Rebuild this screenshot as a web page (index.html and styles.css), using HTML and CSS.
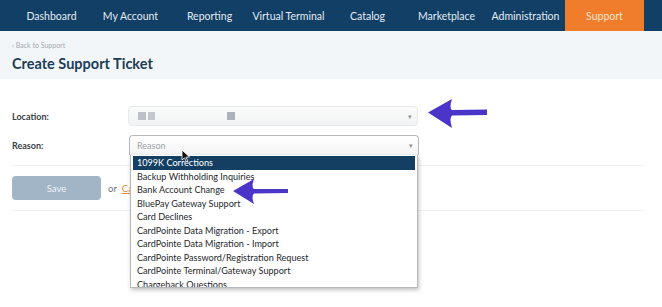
FILE: index.html
```html
<!DOCTYPE HTML>
<html>
<head>
  <title>Create Support Ticket</title>
  <meta name="viewport" content="width=device-width, initial-scale=1">
  <link rel="stylesheet" href="styles.css">
</head>
<body>
  <div class="topnav">
    <a class="navitem" href="#">Dashboard</a>
    <a class="navitem" href="#">My Account</a>
    <a class="navitem" href="#">Reporting</a>
    <a class="navitem" href="#">Virtual Terminal</a>
    <a class="navitem" href="#">Catalog</a>
    <a class="navitem" href="#">Marketplace</a>
    <a class="navitem" href="#">Administration</a>
    <a class="navitem active" href="#">Support</a>
  </div>
  <div class="pagehead">
    <a class="backlink" href="#">&lsaquo; Back to Support</a>
    <h1>Create Support Ticket</h1>
  </div>
  <div class="content">
    <div class="form-row">
      <label class="form-label">Location:</label>
      <div class="select location">
        <span class="blur b1"></span><span class="blur b2"></span><span class="blur b3"></span>
        <span class="caret">&#9662;</span>
      </div>
    </div>
    <div class="form-row">
      <label class="form-label">Reason:</label>
      <div class="field">
        <div class="select reason">
          <span class="placeholder">Reason</span>
          <span class="caret">&#9662;</span>
        </div>
        <ul class="dropdown">
          <li class="selected">1099K Corrections</li>
          <li>Backup Withholding Inquiries</li>
          <li>Bank Account Change</li>
          <li>BluePay Gateway Support</li>
          <li>Card Declines</li>
          <li>CardPointe Data Migration - Export</li>
          <li>CardPointe Data Migration - Import</li>
          <li>CardPointe Password/Registration Request</li>
          <li>CardPointe Terminal/Gateway Support</li>
          <li>Chargeback Questions</li>
        </ul>
      </div>
    </div>
    <div class="actions">
      <button class="save">Save</button>
      <span class="or">or</span>
      <a class="cancel" href="#">Cancel</a>
    </div>
  </div>

  <svg class="arrow arrow-one" width="64" height="32" viewBox="0 0 64 32">
    <path d="M1 13.5 L25 0 Q22 9 25 11 L60 10.5 L60 16 L25 16.5 Q22 19 25 29 Z" fill="#4a35c8"/>
  </svg>
  <svg class="arrow arrow-two" width="58" height="28" viewBox="0 0 58 28">
    <path d="M1 12 L22 0 Q19 8 22 10 L56 10 L56 14 L22 14.5 Q19 17 22 25 Z" fill="#4a35c8"/>
  </svg>
  <svg class="cursor" width="10" height="14" viewBox="0 0 10 14">
    <path d="M1 1 L1 11 L3.5 8.8 L5.5 13 L7 12.3 L5 8.2 L8.5 8 Z" fill="#111" stroke="#fff" stroke-width="0.8"/>
  </svg>
</body>
</html>
```

FILE: styles.css
```css
html {
  font-family: Lato, "Open Sans", Arial, sans-serif;
}
body {
  margin: 0;
  width: 662px;
  height: 307px;
  overflow: hidden;
  position: relative;
  background-color: #ffffff;
}
.topnav {
  display: flex;
  height: 31px;
  padding-left: 12px;
  background-color: #113f66;
}
.navitem {
  width: 79px;
  display: flex;
  align-items: center;
  justify-content: center;
  font-size: 10.5px;
  color: #e4ebf2;
  text-decoration: none;
  white-space: nowrap;
}
.navitem.active {
  background-color: #f07d2b;
  color: #fbe3cf;
}
.pagehead {
  height: 48px;
  padding: 0 12px;
  background-color: #f3f6f9;
  box-sizing: border-box;
  padding-top: 10px;
}
.backlink {
  display: block;
  font-size: 7px;
  color: #a3a8ad;
  text-decoration: none;
}
.pagehead h1 {
  margin: 6px 0 0;
  font-size: 14.5px;
  font-weight: bold;
  color: #1e3d57;
}
.content {
  padding: 27px 17px 0 12px;
}
.form-row {
  display: grid;
  grid-template-columns: 116px 290px;
  align-items: center;
  height: 20px;
  margin-bottom: 9px;
}
.form-label {
  font-size: 9px;
  font-weight: bold;
  color: #3b3f44;
}
.field {
  position: relative;
}
.select {
  position: relative;
  height: 20px;
  box-sizing: border-box;
  border-radius: 4px;
  display: flex;
  align-items: center;
  padding-left: 7px;
}
.location {
  background: linear-gradient(#fbfbfb, #f1f2f3);
  border: 1px solid #e9eaeb;
}
.reason {
  width: 290px;
  margin-left: 1px;
  background: linear-gradient(#ffffff, #f4f4f4);
  border: 1px solid #b6b9bc;
  border-bottom: none;
  border-radius: 4px 4px 0 0;
}
.placeholder {
  font-size: 9px;
  color: #a0a3a6;
}
.caret {
  position: absolute;
  right: 5px;
  top: 5px;
  font-size: 7px;
  color: #8e9194;
}
.blur {
  display: inline-block;
  height: 8px;
  background-color: #bcc1c8;
}
.b1 { width: 8px; margin-left: 2px; }
.b2 { width: 7px; margin-left: 2px; background-color: #c4c8ce; }
.b3 { width: 8px; margin-left: 72px; background-color: #aeb3ba; }
.dropdown {
  position: absolute;
  top: 20px;
  left: 2px;
  width: 288px;
  height: 133px;
  margin: 0;
  padding: 1px 2px 0;
  list-style: none;
  overflow: hidden;
  box-sizing: border-box;
  background-color: #ffffff;
  border: 1px solid #b6b9bc;
  border-top: none;
  box-shadow: 1px 2px 4px rgba(0,0,0,.25);
  z-index: 2;
}
.dropdown li {
  height: 13.5px;
  line-height: 13.5px;
  padding-left: 4px;
  font-size: 9.1px;
  color: #26292c;
  white-space: nowrap;
}
.dropdown li.selected {
  background-color: #143f63;
  color: #ffffff;
}
.actions {
  display: flex;
  align-items: center;
  margin-top: 10px;
  padding: 10px 0;
  border-top: 1px solid #eef0f2;
  border-bottom: 1px solid #eef0f2;
}
.save {
  width: 89px;
  height: 24px;
  border: none;
  border-radius: 4px;
  background-color: #a2b5c6;
  color: #eef2f6;
  font-family: Lato, Arial, sans-serif;
  font-size: 9.5px;
}
.or {
  margin-left: 7px;
  font-size: 9.5px;
  color: #6d7175;
}
.cancel {
  margin-left: 5px;
  font-size: 9.5px;
  color: #e98b3d;
}
.arrow {
  position: absolute;
  z-index: 3;
}
.arrow-one {
  left: 427px;
  top: 99px;
}
.arrow-two {
  left: 232px;
  top: 179px;
}
.cursor {
  position: absolute;
  left: 181px;
  top: 149px;
  z-index: 4;
}
```
